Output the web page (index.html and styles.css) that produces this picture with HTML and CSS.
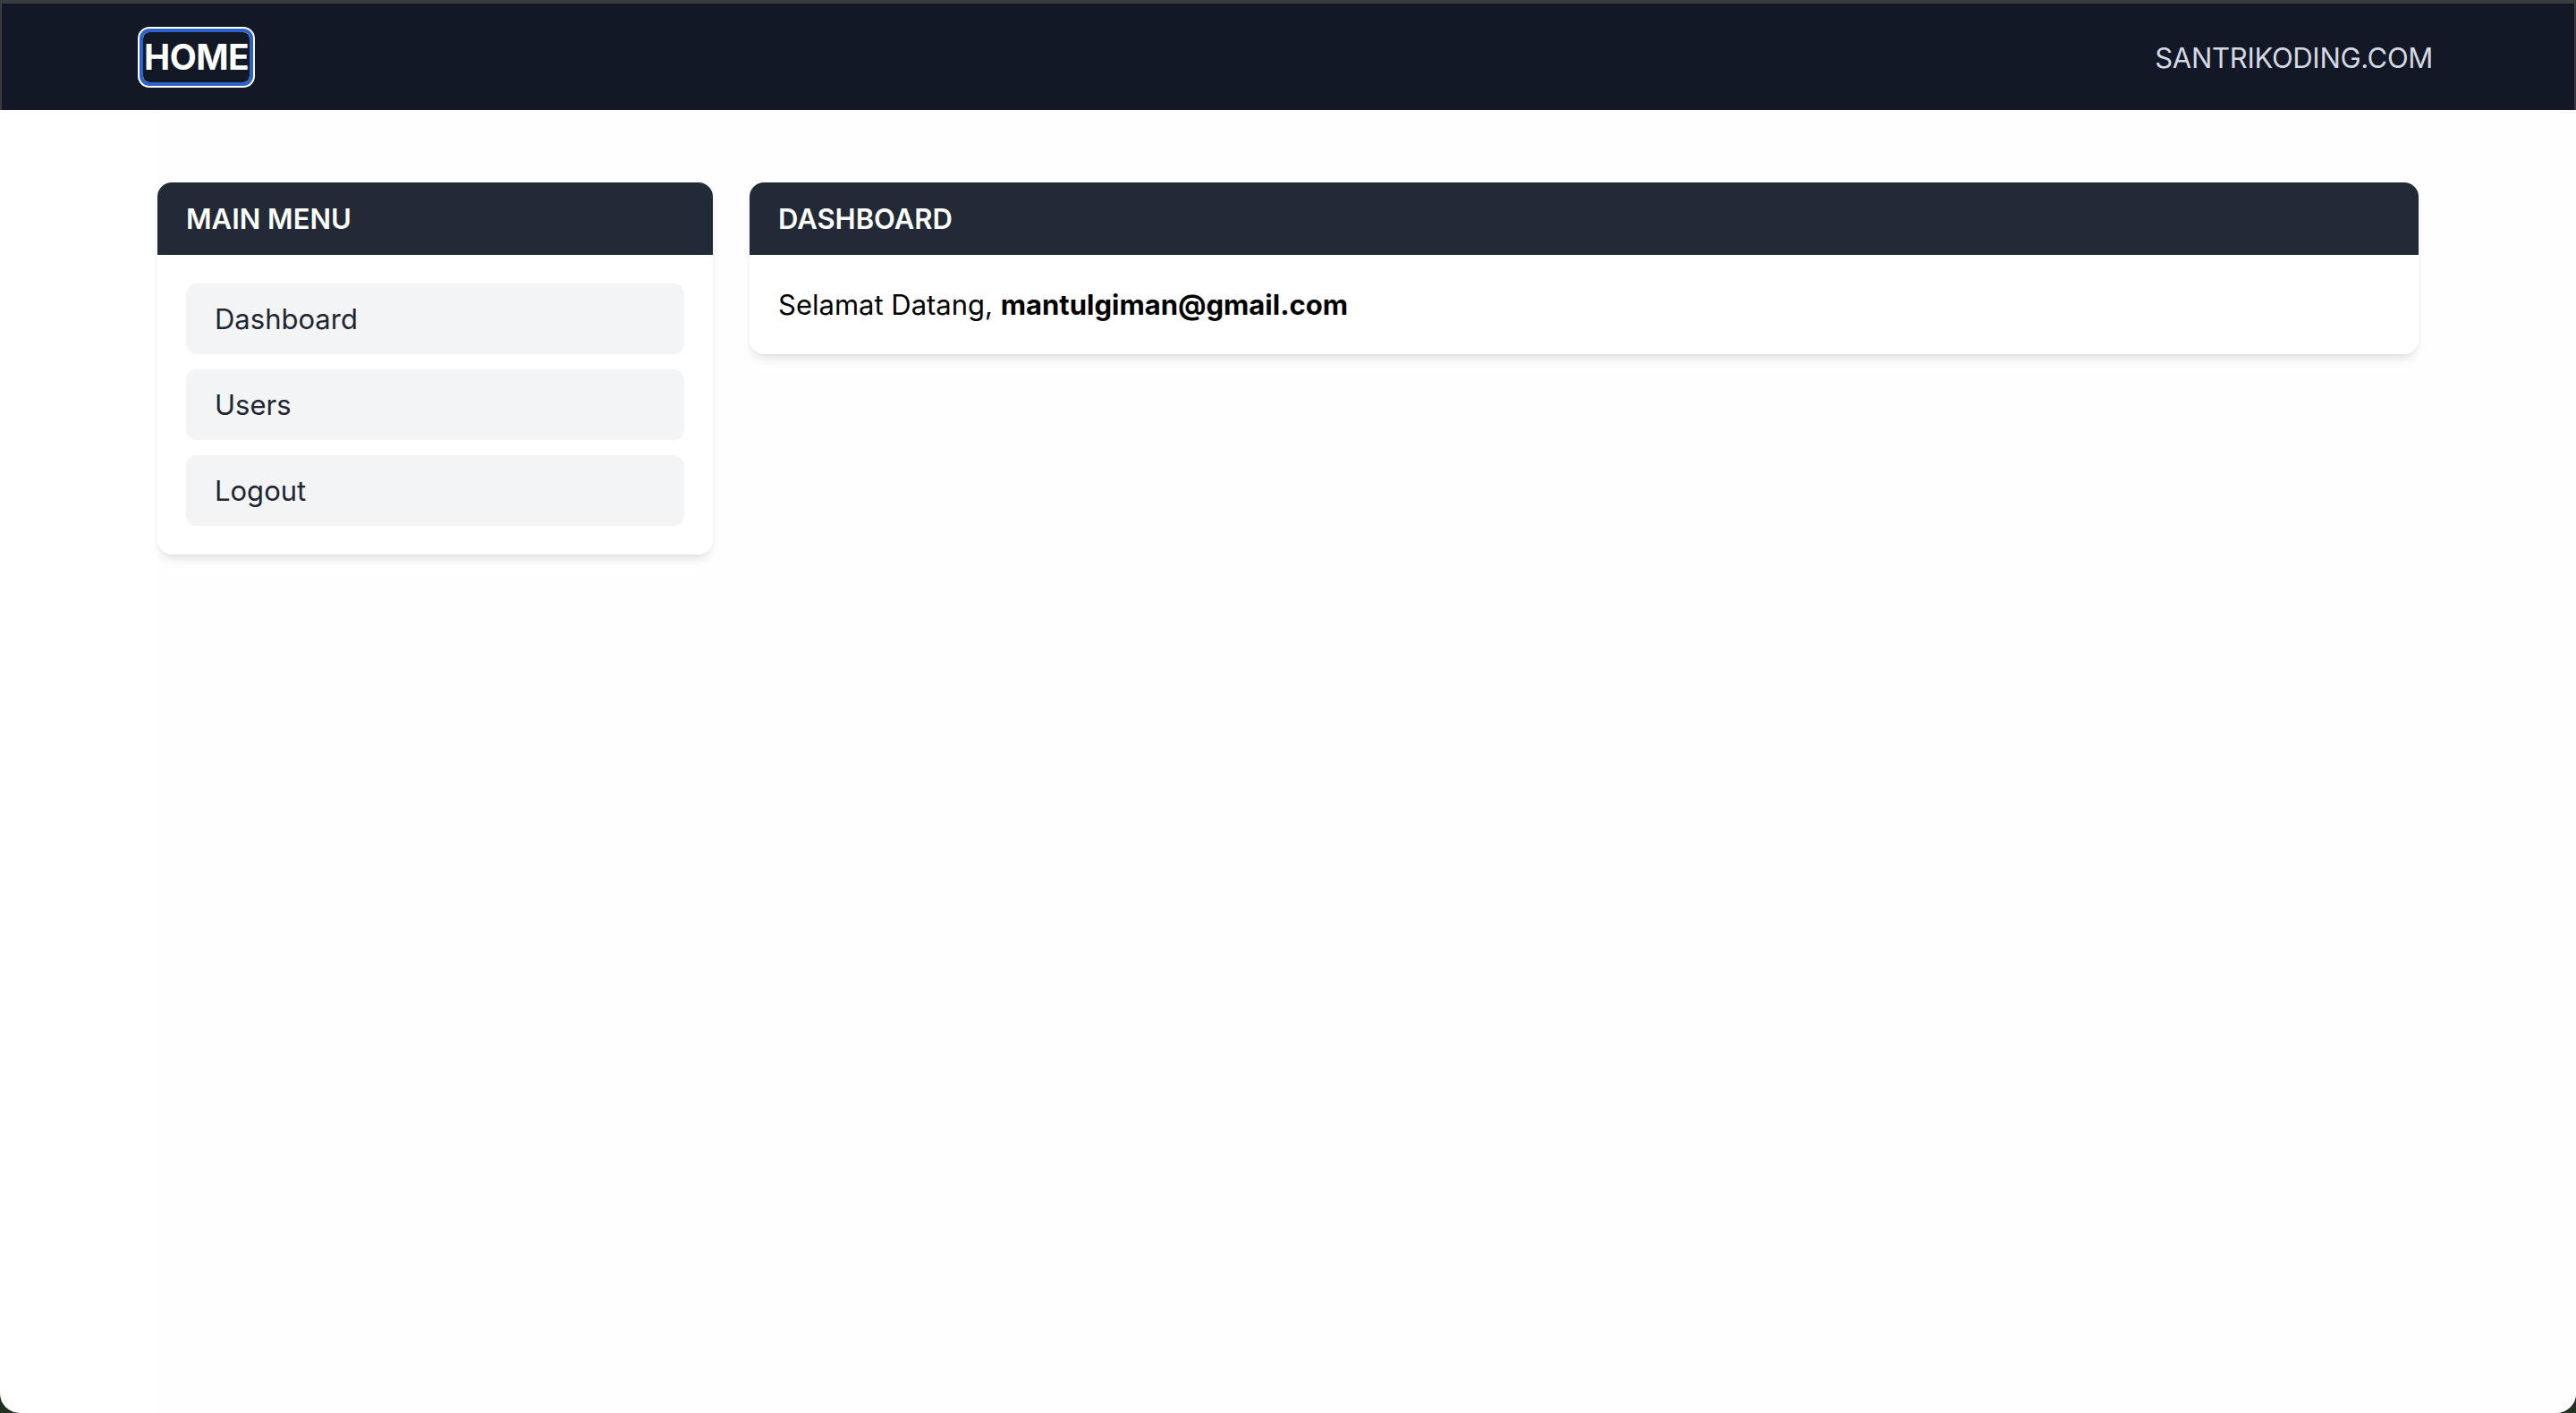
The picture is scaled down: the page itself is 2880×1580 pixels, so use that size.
FILE: index.html
```html
<!DOCTYPE html>
<html lang="id">
<head>
  <meta charset="UTF-8" />
  <meta name="viewport" content="width=device-width, initial-scale=1.0" />
  <title>Dashboard – Santrikoding</title>
  <link rel="stylesheet" href="styles.css">
</head>
<body>
  <nav class="navbar">
    <div class="navbar-inner">
      <a class="brand" href="#">HOME</a>
      <a class="site-link" href="#">SANTRIKODING.COM</a>
    </div>
  </nav>

  <div class="page">
    <div class="content">
      <div class="card">
        <div class="card-header">MAIN MENU</div>
        <div class="card-body menu">
          <a href="#" class="menu-item">Dashboard</a>
          <a href="#" class="menu-item">Users</a>
          <a href="#" class="menu-item">Logout</a>
        </div>
      </div>

      <div class="card">
        <div class="card-header">DASHBOARD</div>
        <div class="card-body">
          Selamat Datang, <strong>mantulgiman@gmail.com</strong>
        </div>
      </div>
    </div>
  </div>
</body>
</html>
```

FILE: styles.css
```css
html {
  background: #22301f;
}

body {
  margin: 0;
  min-height: 100vh;
  display: flex;
  flex-direction: column;
  font-family: Inter, "Noto Sans", sans-serif;
  background: #fff;
  color: #000;
  border-radius: 0 0 22px 22px;
  overflow: hidden;
}

a {
  text-decoration: none;
}

.navbar {
  background: #131826;
  border-top: 4px solid #3c3c3e;
  border-left: 2px solid #3c3c3e;
  border-right: 2px solid #3c3c3e;
}

.navbar-inner {
  width: 2560px;
  height: 119px;
  margin: 0 auto;
  display: flex;
  align-items: center;
  justify-content: space-between;
}

.brand {
  color: #fff;
  font-size: 39px;
  font-weight: 700;
  line-height: 56px;
  letter-spacing: -0.5px;
  padding: 0 1px;
  border-radius: 7px;
  box-shadow: 0 0 0 4px #2d62c8, 0 0 0 6px #fff;
}

.site-link {
  color: #d4d8e2;
  font-size: 31px;
  letter-spacing: -0.3px;
  margin-top: 2px;
}

.page {
  flex: 1;
  margin-left: 176px;
  background: #fefeff;
}

.content {
  width: 2528px;
  padding-top: 81px;
  display: grid;
  grid-template-columns: 621px 1fr;
  gap: 41px;
  align-items: start;
}

.card {
  background: #fff;
  border-radius: 16px;
  box-shadow: 0 8px 12px -2px rgba(0,0,0,0.08), 0 4px 8px -4px rgba(0,0,0,0.08);
}

.card-header {
  background: #222a37;
  color: #fff;
  font-size: 31px;
  font-weight: 600;
  line-height: 48px;
  padding: 17px 32px 16px;
  border-radius: 16px 16px 0 0;
}

.card-body {
  padding: 32px;
  font-size: 31px;
  line-height: 47px;
}

.card-body strong {
  font-weight: 700;
}

.menu {
  display: flex;
  flex-direction: column;
  gap: 17px;
}

.menu-item {
  display: block;
  background: #f3f4f6;
  color: #1f2633;
  padding: 16px 32px;
  border-radius: 12px;
}
```
